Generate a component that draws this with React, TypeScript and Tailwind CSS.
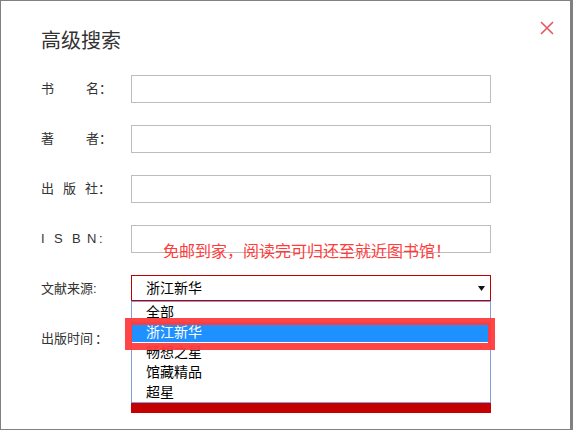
const labelCls = "w-[90px] shrink-0 text-[13px] leading-[28px] text-[#333] whitespace-nowrap"

const sources = ["全部", "浙江新华", "畅想之星", "馆藏精品", "超星"]

function TextBox() {
  return <div className="w-[360px] h-[28px] border border-[#bdbdbd] bg-white" />
}

export default function App() {
  const selected = "浙江新华"

  return (
    <div className="relative w-[573px] h-[430px] overflow-hidden bg-white border-t border-l border-b border-r-[3px] border-[#808080] font-['Liberation_Sans','Noto_Sans_CJK_SC',sans-serif]">
      <button className="absolute left-[539px] top-[20px] w-[14px] h-[14px]">
        <svg width="14" height="14" viewBox="0 0 14 14">
          <path d="M1 1L13 13M13 1L1 13" stroke="#e6575d" strokeWidth="1.6" />
        </svg>
      </button>

      <div className="pl-[40px] pt-[30px]">
        <h2 className="text-[20px] leading-[20px] text-[#333]">高级搜索</h2>

        <div className="mt-[24px] flex flex-col gap-[22px]">
          <div className="flex h-[28px] items-center">
            <div className={labelCls}>
              书<span className="inline-block w-[32px]" />名：
            </div>
            <TextBox />
          </div>

          <div className="flex h-[28px] items-center">
            <div className={labelCls}>
              著<span className="inline-block w-[32px]" />者：
            </div>
            <TextBox />
          </div>

          <div className="flex h-[28px] items-center">
            <div className={labelCls}>
              <span className="tracking-[9px]">出版</span>社：
            </div>
            <TextBox />
          </div>

          <div className="flex h-[28px] items-center">
            <div className={labelCls}>
              <span className="inline-block w-[13px]">I</span>
              <span className="inline-block w-[18px]">S</span>
              <span className="inline-block w-[15px]">B</span>
              <span className="inline-block w-[12px]">N</span>:
            </div>
            <div className="relative">
              <TextBox />
              <p className="absolute left-[32px] top-[19px] whitespace-nowrap text-[16px] leading-[16px] text-[#ff3b3b]">
                免邮到家，阅读完可归还至就近图书馆！
              </p>
            </div>
          </div>

          <div className="flex h-[28px] items-start">
            <div className={labelCls + " leading-[26px]"}>文献来源:</div>
            <div className="relative z-10">
              <div className="flex w-[360px] h-[26px] items-center justify-between border border-[#c00000] bg-white pl-[14px] pr-[5px] text-[14px] text-black">
                <span>{selected}</span>
                <svg width="7" height="5" viewBox="0 0 7 5">
                  <polygon points="0,0 7,0 3.5,5" fill="#111" />
                </svg>
              </div>

              <div className="absolute left-0 top-[26px] w-[360px]">
                <ul className="border border-[#7f9fd8] bg-white text-[14px] leading-[20px] text-black">
                  {sources.map((s) => (
                    <li
                      key={s}
                      className={
                        s === selected
                          ? "h-[20px] pl-[14px] bg-[#1e90ff] text-white"
                          : "h-[20px] pl-[14px]"
                      }
                    >
                      {s}
                    </li>
                  ))}
                </ul>
                <div className="h-[10px] bg-[#c40000]" />
                <div className="absolute left-[-6px] top-[17px] w-[370px] h-[32px] border-[7px] border-[#ff3b3b]/95" />
              </div>
            </div>
          </div>

          <div className="flex h-[28px] items-center">
            <div className={labelCls}>
              出版时间<span className="ml-[2px]">：</span>
            </div>
          </div>
        </div>
      </div>
    </div>
  )
}
